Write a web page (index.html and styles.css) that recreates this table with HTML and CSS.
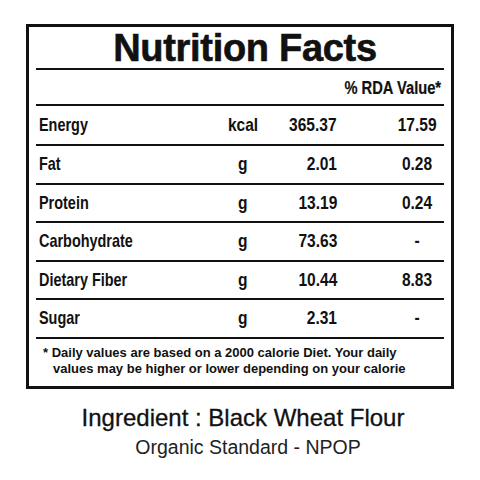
FILE: index.html
```html
<!DOCTYPE html>
<html>
<head>
<meta charset="utf-8">
<link rel="stylesheet" href="styles.css">
</head>
<body>
<div class="page">
  <div class="label">
    <div class="title">Nutrition Facts</div>
    <div class="rda-head"><span class="cond">% RDA Value*</span></div>
    <div class="row first">
      <span class="name"><span class="cond">Energy</span></span><span class="unit"><span class="cond">kcal</span></span><span class="val"><span class="cond">365.37</span></span><span class="rda"><span class="cond">17.59</span></span>
    </div>
    <div class="row">
      <span class="name"><span class="cond">Fat</span></span><span class="unit"><span class="cond">g</span></span><span class="val"><span class="cond">2.01</span></span><span class="rda"><span class="cond">0.28</span></span>
    </div>
    <div class="row">
      <span class="name"><span class="cond">Protein</span></span><span class="unit"><span class="cond">g</span></span><span class="val"><span class="cond">13.19</span></span><span class="rda"><span class="cond">0.24</span></span>
    </div>
    <div class="row">
      <span class="name"><span class="cond">Carbohydrate</span></span><span class="unit"><span class="cond">g</span></span><span class="val"><span class="cond">73.63</span></span><span class="rda"><span class="cond">-</span></span>
    </div>
    <div class="row">
      <span class="name"><span class="cond">Dietary Fiber</span></span><span class="unit"><span class="cond">g</span></span><span class="val"><span class="cond">10.44</span></span><span class="rda"><span class="cond">8.83</span></span>
    </div>
    <div class="row">
      <span class="name"><span class="cond">Sugar</span></span><span class="unit"><span class="cond">g</span></span><span class="val"><span class="cond">2.31</span></span><span class="rda"><span class="cond">-</span></span>
    </div>
    <div class="note">* Daily values are based on a 2000 calorie Diet. Your daily values may be higher or lower depending on your calorie</div>
  </div>
  <div class="ingredient">Ingredient : Black Wheat Flour</div>
  <div class="standard">Organic Standard - NPOP</div>
</div>
</body>
</html>
```
FILE: styles.css
```css
* { box-sizing: border-box; }
html, body { margin: 0; padding: 0; background: #fff; }
body { width: 480px; height: 480px; color: #111; font-family: "Liberation Sans", Arial, sans-serif; }
.page { padding-top: 24px; display: flex; flex-direction: column; align-items: center; }
.label {
  width: 428px;
  border: 3px solid #111;
  padding: 0 7px;
  display: flex;
  flex-direction: column;
}
.title {
  height: 43px;
  border-bottom: 2px solid #111;
  font-weight: bold;
  font-size: 38px;
  line-height: 38px;
  text-align: center;
  letter-spacing: -0.3px;
  padding: 2px 0 0 10px;
  -webkit-text-stroke: 0.6px #111;
}
.cond {
  display: inline-block;
  transform: scaleX(0.84);
  white-space: nowrap;
}
.rda-head {
  height: 36px;
  border-bottom: 2px solid #111;
  font-weight: bold;
  font-size: 17.5px;
  display: flex;
  align-items: center;
  justify-content: flex-end;
  padding: 3px 3px 0 0;
  -webkit-text-stroke: 0.2px #111;
}
.rda-head .cond { transform-origin: right center; }
.row {
  height: 38.5px;
  border-bottom: 2px solid #111;
  display: grid;
  grid-template-columns: 179px 56px 67px 1fr;
  align-items: center;
  font-weight: bold;
  font-size: 18.5px;
}
.row.first { height: 40px; }
.name { padding-left: 3px; }
.name .cond { transform-origin: left center; transform: scaleX(0.78); }
.unit { text-align: center; }
.val { text-align: right; padding-right: 1px; }
.val .cond { transform-origin: right center; }
.rda { text-align: center; padding-left: 52px; }
.note {
  height: 47px;
  font-weight: bold;
  font-size: 13px;
  line-height: 16.5px;
  padding: 6px 14px 0 17px;
  text-indent: -10px;
}
.ingredient {
  margin-top: 15px;
  padding-left: 6px;
  font-size: 24px;
  line-height: 28px;
  -webkit-text-stroke: 0.3px #111;
  color: #111;
}
.standard {
  margin-top: 3px;
  padding-left: 16px;
  font-size: 19.5px;
  line-height: 24px;
  color: #222;
}
```
